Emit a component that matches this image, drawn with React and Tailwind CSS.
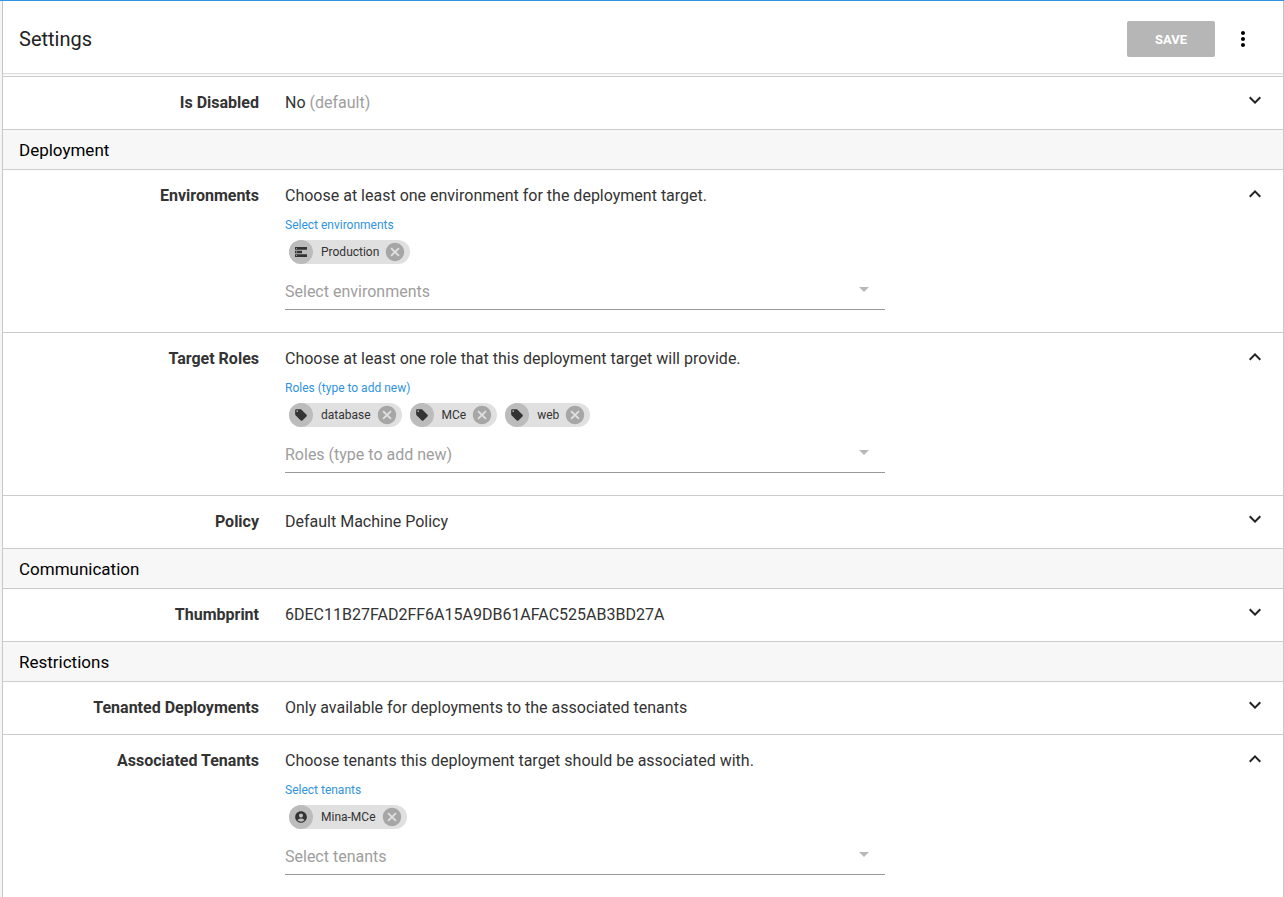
import { useState } from 'react';
import { MdAccountCircle, MdArrowDropDown, MdCancel, MdExpandLess, MdExpandMore, MdLocalOffer, MdMoreVert } from 'react-icons/md';

const ServerIcon = () => (
    <svg viewBox="0 0 12 10" className="w-3 h-[10px]" fill="currentColor">
        <path fillRule="evenodd" d="M0 0h12v2.7H0zM1 .9v.9h1V.9zM0 3.7h7v2.6H0zM1 4.5v1h1v-1zM0 7.3h12V10H0zM1 8.2v.9h1v-.9z" />
    </svg>
);

const chipIcons = {
    environment: <ServerIcon />,
    role: <MdLocalOffer size={14} />,
    tenant: <MdAccountCircle size={14} />
};

const Chip = ({ kind, label, onRemove }) => (
    <li className="flex items-center h-6 rounded-full bg-[#e0e0e0] pr-1">
        <span className="flex items-center justify-center w-6 h-6 rounded-full bg-[#bcbcbc] text-[#333]">
            {chipIcons[kind]}
        </span>
        <span className="pl-2 pr-[5px] text-xs text-[#333]">{label}</span>
        <button type="button" aria-label={`Remove ${label}`} onClick={onRemove} className="text-[#a6a6a6]">
            <MdCancel size={22} />
        </button>
    </li>
);

const ChipSelect = ({ id, kind, label, initial }) => {
    const [items, setItems] = useState(initial);

    return (
        <div className="max-w-[600px]">
            <label htmlFor={id} className="block pt-[7px] text-xs leading-5 text-[#2f93e0]">{label}</label>
            <ul className="flex flex-wrap gap-2 px-1 pt-[5px]">
                {items.map(item => (
                    <Chip
                        key={item}
                        kind={kind}
                        label={item}
                        onRemove={() => setItems(items.filter(i => i !== item))}
                    />
                ))}
            </ul>
            <div className="flex items-center h-[46px] pt-2 pr-[9px] border-b border-[#999]">
                <input
                    id={id}
                    type="text"
                    placeholder={label}
                    className="flex-1 min-w-0 pt-[2px] bg-transparent text-base text-[#333] placeholder:text-[#9e9e9e] outline-none"
                />
                <MdArrowDropDown size={24} className="mb-1 text-[#b8b8b8]" />
            </div>
        </div>
    );
};

const Row = ({ title, summary, children }) => {
    const expanded = Boolean(children);

    return (
        <section className="flex items-start border-b border-[#ccc] pr-4">
            <h3 className="w-64 shrink-0 py-[14px] text-right text-base font-bold text-[#333]">{title}</h3>
            <div className={expanded ? 'flex-1 min-w-0 pl-[26px] pt-[14px] pb-[22px]' : 'flex-1 min-w-0 pl-[26px] py-[14px]'}>
                <p className="text-base text-[#333]">{summary}</p>
                {children}
            </div>
            <button
                type="button"
                aria-label={`Toggle ${title}`}
                aria-expanded={expanded}
                className={expanded ? 'pt-3 text-[#222]' : 'pt-[11px] text-[#222]'}
            >
                {expanded ? <MdExpandLess size={24} /> : <MdExpandMore size={24} />}
            </button>
        </section>
    );
};

const SectionHeading = ({ children }) => (
    <h2 className="h-10 pl-4 border-b border-[#ccc] bg-[#f7f7f7] text-[17px] leading-10 text-black">{children}</h2>
);

const App = () => {
    return (
        <div className="h-screen overflow-hidden border-t border-[#2f93e0] bg-[#f5f5f5] pl-[2px] font-[Roboto,sans-serif]">
            <main className="min-h-full border-x border-[#c8c8c8] bg-white">
                <header className="flex items-center h-[73px] pt-1 px-4 border-b border-[#ddd] shadow-xs">
                    <h1 className="flex-1 text-xl text-[#222]">Settings</h1>
                    <button type="button" disabled className="w-[88px] h-9 pt-px rounded-xs bg-[#b6b6b6] text-[13px] font-bold text-white">
                        SAVE
                    </button>
                    <button type="button" aria-label="More actions" className="flex items-center justify-center w-12 h-12 ml-1 text-black">
                        <MdMoreVert size={24} />
                    </button>
                </header>

                <div className="mt-[2px] border-t border-[#ccc]">
                    <Row title="Is Disabled" summary={<>No <span className="text-[#9e9e9e]">(default)</span></>} />

                    <SectionHeading>Deployment</SectionHeading>
                    <Row title="Environments" summary="Choose at least one environment for the deployment target.">
                        <ChipSelect id="environments" kind="environment" label="Select environments" initial={['Production']} />
                    </Row>
                    <Row title="Target Roles" summary="Choose at least one role that this deployment target will provide.">
                        <ChipSelect id="roles" kind="role" label="Roles (type to add new)" initial={['database', 'MCe', 'web']} />
                    </Row>
                    <Row title="Policy" summary="Default Machine Policy" />

                    <SectionHeading>Communication</SectionHeading>
                    <Row title="Thumbprint" summary="6DEC11B27FAD2FF6A15A9DB61AFAC525AB3BD27A" />

                    <SectionHeading>Restrictions</SectionHeading>
                    <Row title="Tenanted Deployments" summary="Only available for deployments to the associated tenants" />
                    <Row title="Associated Tenants" summary="Choose tenants this deployment target should be associated with.">
                        <ChipSelect id="tenants" kind="tenant" label="Select tenants" initial={['Mina-MCe']} />
                    </Row>
                </div>
            </main>
        </div>
    );
};

export default App;
